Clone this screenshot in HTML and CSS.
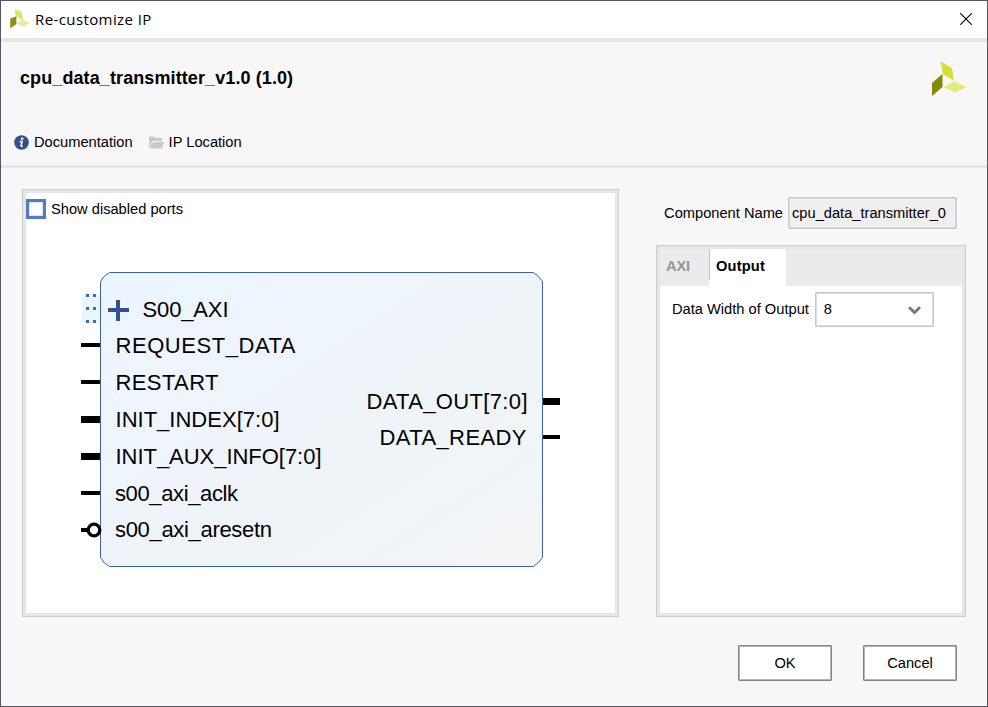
FILE: index.html
```html
<!DOCTYPE html>
<html lang="en">
<head>
<meta charset="utf-8">
<title>Re-customize IP</title>
<link rel="stylesheet" href="styles.css">
</head>
<body>
<div class="window">
  <div class="titlebar">
    <svg class="title-logo" viewBox="0 0 35 36"><path fill="#dfe36c" d="M8 0l12 5 4 17-14-9z"/><path fill="#8d9018" d="M0 17l11-4v14L0 35z"/><path fill="#e6eaa0" d="M11 26l12-6 12 5-11 7z"/></svg>
    <span class="title">Re-customize IP</span>
    <svg class="close" viewBox="0 0 12 12"><path d="M.3.3l11.4 11.4M11.7.3L.3 11.7" fill="none" stroke="#000" stroke-width="1.1"/></svg>
  </div>
  <header class="header">
    <div class="heading-row">
      <h1>cpu_data_transmitter_v1.0 (1.0)</h1>
      <svg class="logo" viewBox="0 0 35 36"><path fill="#d6df35" d="M8.500 0L20 7.300 22 20 11 12.700z"/><path fill="#858a06" d="M0 22l10.500-9v13L0 35z"/><path fill="#e4ea7c" d="M11 26l11.500-5.500L34.700 26 23 31.500z"/></svg>
    </div>
    <nav class="links">
      <span class="link"><svg class="info" viewBox="0 0 15 15"><circle cx="7.500" cy="7.500" r="7.300" fill="#34508a"/><circle cx="8.200" cy="3.700" r="1.300" fill="#fff"/><path d="M5.600 6.400h2.500l-1 4.300q-.2 1 1.500.3" fill="none" stroke="#fff" stroke-width="1.500"/></svg><span class="link-text">Documentation</span></span>
      <span class="link"><svg class="folder" viewBox="0 0 15 13"><path fill="#c9c9c9" d="M0 12V1.500Q0 .5 1 .5h4l1.500 1.600H12q1 0 1 1V5H4L1.500 8v4.500z"/><path fill="#c9c9c9" d="M4.500 6H15l-2 6.500H2V9z"/></svg><span class="link-text">IP Location</span></span>
    </nav>
  </header>
  <main class="content">
    <section class="panel preview">
      <label class="check"><span class="box"></span><span class="check-text">Show disabled ports</span></label>
      <svg class="diagram" viewBox="26 226 589 387">
        <defs><linearGradient id="fill" x1="0" y1="0" x2="1" y2="1"><stop offset="0" stop-color="#ebf5fe"/><stop offset=".4" stop-color="#eff4fc"/><stop offset=".6" stop-color="#eff4f8"/><stop offset="1" stop-color="#f3f4f6"/></linearGradient></defs>
        <path d="M109.500 272.500h424q4 2 9 9v276q-3 5-9 9h-424q-5-2-9-9v-276q3-6 9-9z" fill="url(#fill)" stroke="#3b62a8"/>
        <path d="M82 294h18v29H82z" fill="#eaf5fe"/>
        <path d="M86 294h3v3h-3zM93 294h3v3h-3zM86 307h3v3h-3zM93 307h3v3h-3zM86 320h3v3h-3zM93 320h3v3h-3z" fill="#3a6ea5"/>
        <path d="M108 308h21v4h-21zM116 300h4v21h-4z" fill="#34508f"/>
        <path d="M81 343h19v4H81zM81 380h19v4H81zM81 416h19v7H81zM81 453h19v7H81zM81 491h19v4H81zM81 528h7v4h-7zM543 398h17v7h-17zM543 435h17v4h-17z"/>
        <circle cx="94" cy="530" r="5.800" fill="#fff" stroke="#000" stroke-width="3.300"/>
        <g class="ports">
          <text x="142.500" y="317" textLength="86">S00_AXI</text>
          <text x="115.500" y="353" textLength="180">REQUEST_DATA</text>
          <text x="115.500" y="390" textLength="103">RESTART</text>
          <text x="115.500" y="427" textLength="164">INIT_INDEX[7:0]</text>
          <text x="115.500" y="464" textLength="206">INIT_AUX_INFO[7:0]</text>
          <text x="115" y="501" textLength="123">s00_axi_aclk</text>
          <text x="115" y="537" textLength="157">s00_axi_aresetn</text>
          <text x="366.500" y="409" textLength="161">DATA_OUT[7:0]</text>
          <text x="379.500" y="445" textLength="147">DATA_READY</text>
        </g>
      </svg>
    </section>
    <section class="side">
      <div class="name-row"><span>Component Name</span><div class="name-field"><span>cpu_data_transmitter_0</span></div></div>
      <div class="panel tabs-panel">
        <div class="tabs"><div class="tab">AXI</div><div class="tab active">Output</div></div>
        <div class="param"><span class="param-label">Data Width of Output</span><div class="select"><span class="value">8</span><svg viewBox="0 0 13 9"><path d="M1 1.300l5.500 5.200L12 1.300" fill="none" stroke="#787878" stroke-width="2.800"/></svg></div></div>
      </div>
    </section>
  </main>
  <footer class="buttons"><div class="button">OK</div><div class="button">Cancel</div></footer>
</div>
</body>
</html>
```
FILE: styles.css
```css
* { box-sizing: border-box; }
body {
  margin: 0;
  width: 988px;
  height: 707px;
  overflow: hidden;
  font: 14.67px/18px "Liberation Sans", Arial, sans-serif;
  color: #000;
}
svg { display: block; flex: none; }
span { white-space: nowrap; }
.window {
  width: 988px;
  height: 707px;
  border: 1px solid #55555d;
  background: #f7f7f7;
  display: flex;
  flex-direction: column;
}
.titlebar {
  height: 41px;
  flex: none;
  display: flex;
  align-items: center;
  padding: 0 15px 2px 9px;
  background: #fff;
  border-bottom: 4px solid #e6e6e6;
}
.title-logo { width: 20px; height: 20px; }
.title {
  flex: 1;
  margin-left: 5px;
  font: 15px/20px "Open Sans", "Noto Sans", sans-serif;
  letter-spacing: .4px;
}
.close { width: 12px; height: 12px; }
.header {
  height: 126px;
  flex: none;
  border-bottom: 3px solid #e6e6e6;
  padding: 20px 20px 0 13px;
}
.heading-row {
  display: flex;
  justify-content: space-between;
  height: 70px;
}
h1 {
  margin: 4px 0 0 6px;
  font-size: 18px;
  line-height: 24px;
  font-weight: bold;
  letter-spacing: .1px;
}
.logo { width: 35px; height: 36px; margin-top: -1px; }
.links { display: flex; gap: 16px; }
.link { display: flex; align-items: center; gap: 5px; height: 18px; }
.link-text { padding-top: 2px; }
.info { width: 15px; height: 15px; margin-top: 2px; }
.folder { width: 15px; height: 13px; margin-top: 2px; }
.content {
  display: flex;
  justify-content: space-between;
  padding: 21px 21px 0 21px;
  height: 449px;
  flex: none;
}
.panel {
  border: 1px solid #ccc;
  box-shadow: inset 0 0 0 3px #e6e6e6;
  padding: 3px;
  background: #fff;
}
.preview { width: 597px; height: 428px; }
.check {
  display: flex;
  gap: 5px;
  height: 33px;
  padding-top: 6px;
}
.box { width: 20px; height: 20px; border: 3px solid #507bcc; box-shadow: inset 0 0 1px 1px #e0e0e0; }
.check-text { margin-top: 1px; }
.diagram { width: 589px; height: 387px; }
.ports { font-size: 22px; }
.side { width: 310px; padding-top: 8px; }
.name-row {
  display: flex;
  justify-content: flex-end;
  align-items: center;
  gap: 5px;
  padding-right: 9px;
  height: 32px;
}
.name-field {
  width: 169px;
  height: 32px;
  border: 1px solid #c8c8c8;
  border-radius: 1px;
  box-shadow: inset 0 0 0 1px #dcdcdc, 0 0 0 1px #fff;
  background: #efefef;
  padding: 6px 3px;
}
.tabs-panel { margin-top: 16px; height: 372px; }
.tabs { display: flex; height: 37px; background: #ebebeb; }
.tab {
  padding: 8px 6px;
  font-weight: bold;
  color: #969696;
  width: 49px;
  letter-spacing: -.2px;
}
.tab.active {
  width: 77px;
  background: linear-gradient(#c4c4c4, #c4c4c4) 0 0 / 1px 31px no-repeat #fff;
  color: #000;
  padding-left: 7px;
  letter-spacing: .15px;
}
.param {
  display: flex;
  align-items: center;
  gap: 6px;
  padding: 6px 0 0 12px;
}
.param-label, .value { padding-bottom: 2px; }
.select {
  width: 119px;
  height: 35px;
  border: 1px solid #c8c8c8;
  border-radius: 1px;
  box-shadow: inset 0 0 0 1px #dcdcdc;
  display: flex;
  align-items: center;
  justify-content: space-between;
  padding: 0 12px 0 8px;
}
.select svg { width: 13px; height: 9px; margin-top: 1px; }
.buttons {
  display: flex;
  justify-content: flex-end;
  gap: 31px;
  padding: 28px 30px 0 0;
}
.button {
  width: 94px;
  height: 36px;
  border: 1px solid #858585;
  border-radius: 1px;
  box-shadow: inset 0 0 0 1px #b4b4b4;
  background: #fff;
  line-height: 34px;
  text-align: center;
}
```
